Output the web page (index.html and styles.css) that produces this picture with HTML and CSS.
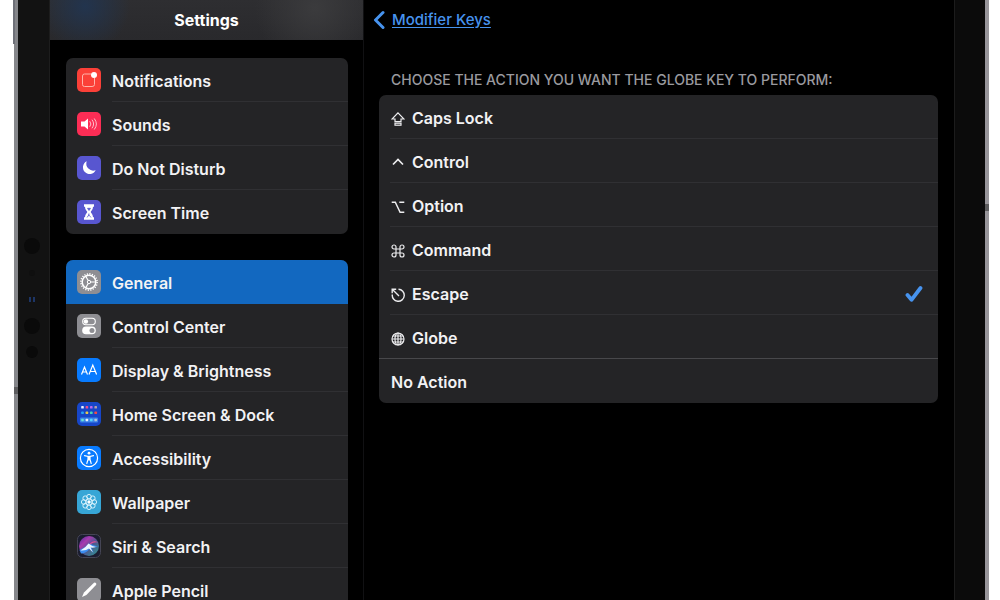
FILE: index.html
```html
<!DOCTYPE html>
<html lang="en">
<head>
<meta charset="utf-8">
<meta name="viewport" content="width=device-width, initial-scale=1">
<title>Settings</title>
<link rel="stylesheet" href="styles.css">
</head>
<body>
<div class="device">
  <span class="side-button"></span>
  <span class="antenna antenna-left"></span>
  <span class="antenna antenna-right"></span>
  <div class="bezel bezel-left">
    <svg class="sensors" width="30" height="130" viewBox="0 0 30 130" aria-hidden="true">
      <g fill="#0a0a0a"><circle cx="14" cy="11" r="8"/><circle cx="14" cy="38" r="3" fill="#0f0f0f"/><circle cx="14" cy="91" r="8"/><circle cx="14" cy="117" r="6"/></g>
      <path d="M12 62v5M16 62v5" stroke="#1d3566" stroke-width="2"/>
    </svg>
  </div>
  <div class="screen">
    <aside class="sidebar">
      <header class="sidebar-header"><h1>Settings</h1></header>
      <nav class="menu" aria-label="Settings">
        <div class="card">
          <a class="item" href="#notifications">
            <svg class="app-icon" viewBox="0 0 24 24" aria-hidden="true"><rect width="24" height="24" rx="5" fill="#fb4038"/><path d="M14 6H7.500Q5.500 6 5.500 8v8.500q0 2 2 2H15q2.500 0 2.500-2V10" fill="none" stroke="#ffb3aa" stroke-width="1"/><circle cx="17" cy="7" r="3" fill="#fff"/></svg>
            <span class="item-text">Notifications</span></a>
          <a class="item" href="#sounds">
            <svg class="app-icon" viewBox="0 0 24 24" aria-hidden="true"><rect width="24" height="24" rx="5" fill="#fc2d55"/><path d="M4 9.500h3.500L11 6.500v11L7.500 14.500H4z" fill="#fff"/><path d="M13 9.500q2 2.500 0 5M15.200 8q3 4 0 8M17.500 6.800q4 5.200 0 10.400" fill="none" stroke="#ffc0cc" stroke-width="1" stroke-linecap="round"/></svg>
            <span class="item-text">Sounds</span></a>
          <a class="item" href="#do-not-disturb">
            <svg class="app-icon" viewBox="0 0 24 24" aria-hidden="true"><rect width="24" height="24" rx="5" fill="#5856d0"/><path d="M9.700 5.300a6.700 6.700 0 1 0 9 8.900A7 7 0 0 1 9.700 5.300z" fill="#fff"/></svg>
            <span class="item-text">Do Not Disturb</span></a>
          <a class="item" href="#screen-time">
            <svg class="app-icon" viewBox="0 0 24 24" aria-hidden="true"><rect width="24" height="24" rx="5" fill="#5856d0"/><path d="M7 4.300h10v2.400h-1c0 3-1.800 4-2.300 5.300.5 1.300 2.300 2.300 2.300 5.300h1v2.400H7v-2.400h1c0-3 1.800-4 2.300-5.300C9.800 10.700 8 9.700 8 6.700H7z" fill="#fff"/><path d="M10.500 8.300h3L12 10.500zM12 13.500v1.500l-2 2.500M12 15l2 2.500" fill="#5856d0" stroke="#5856d0" stroke-width=".7"/></svg>
            <span class="item-text">Screen Time</span></a>
        </div>
        <div class="card">
          <a class="item item-selected" href="#general" aria-current="page">
            <svg class="app-icon" viewBox="0 0 24 24" aria-hidden="true"><rect width="24" height="24" rx="5" fill="#8e8e93"/><circle cx="12" cy="12" r="8.100" fill="none" stroke="#fff" stroke-width="1.600" stroke-dasharray="1.200 1.350"/><circle cx="12" cy="12" r="6.800" fill="none" stroke="#fff" stroke-width="1.500"/><circle cx="12" cy="12" r="1.700" fill="none" stroke="#fff"/><path d="M13.700 12h4.800M11.200 10.500 8.700 6.300M11.200 13.500 8.700 17.700" stroke="#fff" stroke-width="1.200"/></svg>
            <span class="item-text">General</span></a>
          <a class="item" href="#control-center">
            <svg class="app-icon" viewBox="0 0 24 24" aria-hidden="true"><rect width="24" height="24" rx="5" fill="#8e8e93"/><rect x="5.700" y="4.300" width="12.600" height="6.400" rx="3.200" fill="none" stroke="#fff" stroke-width="1.100"/><circle cx="8.900" cy="7.500" r="2.200" fill="#fff"/><rect x="5.200" y="12.600" width="13.600" height="7.600" rx="3.800" fill="#fff"/><circle cx="15" cy="16.400" r="2.500" fill="#8e8e93"/></svg>
            <span class="item-text">Control Center</span></a>
          <a class="item" href="#display">
            <svg class="app-icon" viewBox="0 0 24 24" aria-hidden="true"><rect width="24" height="24" rx="5" fill="#087bff"/><g fill="none" stroke="#fff" stroke-width="1.200"><path d="m4.500 16.500 3-7.500 3 7.500M5.500 14h4M12 16.500 15.800 7l3.800 9.500M13.200 13.500h5.200"/></g></svg>
            <span class="item-text">Display &amp; Brightness</span></a>
          <a class="item" href="#home-screen">
            <svg class="app-icon" viewBox="0 0 24 24" aria-hidden="true"><rect width="24" height="24" rx="5" fill="#1746c8"/><rect x="3" y="15.500" width="18" height="5" rx="1" fill="#3d84e8"/><g fill="#e8f0ff"><rect x="4.200" y="4" width="2.600" height="2.600" rx=".7"/><rect x="8.600" y="4" width="2.600" height="2.600" rx=".7" fill="#f04c87"/><rect x="13" y="4" width="2.600" height="2.600" rx=".7" fill="#bd68ee"/><rect x="17.400" y="4" width="2.600" height="2.600" rx=".7" fill="#b8a0a8"/><rect x="4.200" y="9.500" width="2.600" height="2.600" rx=".7" fill="#27a4f8"/><rect x="8.600" y="9.500" width="2.600" height="2.600" rx=".7" fill="#e9c84b"/><rect x="13" y="9.500" width="2.600" height="2.600" rx=".7" fill="#48d6b5"/><rect x="17.400" y="9.500" width="2.600" height="2.600" rx=".7" fill="#f04b48"/><rect x="4.200" y="16.700" width="2.600" height="2.600" rx=".7" fill="#69e3d0"/><rect x="8.600" y="16.700" width="2.600" height="2.600" rx=".7"/><rect x="13" y="16.700" width="2.600" height="2.600" rx=".7" fill="#53d7ff"/><rect x="17.400" y="16.700" width="2.600" height="2.600" rx=".7" fill="#b5c5d8"/></g></svg>
            <span class="item-text">Home Screen &amp; Dock</span></a>
          <a class="item" href="#accessibility">
            <svg class="app-icon" viewBox="0 0 24 24" aria-hidden="true"><rect width="24" height="24" rx="5" fill="#087bff"/><circle cx="12" cy="12" r="8.600" fill="none" stroke="#fff" stroke-width="1.200"/><circle cx="12" cy="7.200" r="1.400" fill="#fff"/><path d="m7.500 9.700 3.500.8v3l-1.200 4M16.500 9.700l-3.500.8v3l1.200 4M12 10v4" fill="none" stroke="#fff" stroke-width="1.200" stroke-linecap="round"/></svg>
            <span class="item-text">Accessibility</span></a>
          <a class="item" href="#wallpaper">
            <svg class="app-icon" viewBox="0 0 24 24" aria-hidden="true"><rect width="24" height="24" rx="5" fill="#37a6d6"/><g fill="none" stroke="#d8f2fc" stroke-width="1"><circle cx="12" cy="6.700" r="2.300"/><circle cx="15.800" cy="8.200" r="2.300"/><circle cx="17.300" cy="12" r="2.300"/><circle cx="15.800" cy="15.800" r="2.300"/><circle cx="12" cy="17.300" r="2.300"/><circle cx="8.200" cy="15.800" r="2.300"/><circle cx="6.700" cy="12" r="2.300"/><circle cx="8.200" cy="8.200" r="2.300"/><circle cx="12" cy="12" r="3.200"/></g><circle cx="12" cy="12" r="1.700" fill="#fff"/></svg>
            <span class="item-text">Wallpaper</span></a>
          <a class="item" href="#siri">
            <svg class="app-icon" viewBox="0 0 24 24" aria-hidden="true"><defs><linearGradient id="orb" x1="0" y1="0" x2="1" y2="1"><stop offset="0" stop-color="#4b2b9c"/><stop offset=".3" stop-color="#a83bae"/><stop offset=".55" stop-color="#4e578f"/><stop offset="1" stop-color="#2c9a90"/></linearGradient></defs><rect x=".5" y=".5" width="23" height="23" rx="5" fill="#1b1d30" stroke="#454555"/><circle cx="12" cy="12" r="10" fill="url(#orb)"/><path d="M2.500 16Q8 14 12 9.500q5 2 9 3-4 1-7 .5l3 6.500-4-5q-4 5-9 5z" fill="#3b8df0"/><path d="M3.500 16.500Q9 13.500 11.500 9.500 15 12.500 19 13q-3 1-5.500.5l2.500 5-4-4q-3 2.500-8.500 2z" fill="#e9f5ff"/><path d="M13 9.500q4-4 8-1-4-1-8 2z" fill="#e64f93"/></svg>
            <span class="item-text">Siri &amp; Search</span></a>
          <a class="item" href="#pencil">
            <svg class="app-icon" viewBox="0 0 24 24" aria-hidden="true"><rect width="24" height="24" rx="5" fill="#8e8e93"/><path d="m5 19 2-4.500L17 4.800q1-.8 1.900.1.900 1 .1 2L9.400 17z" fill="#fff"/></svg>
            <span class="item-text">Apple Pencil</span></a>
        </div>
      </nav>
    </aside>
    <main class="detail">
      <header class="detail-header">
        <a class="back" href="#modifier-keys">
          <svg width="12" height="20" viewBox="0 0 12 20" aria-hidden="true"><path d="M10 2.500 2.500 10l7.500 7.500" fill="none" stroke="#4793ee" stroke-width="3" stroke-linecap="round" stroke-linejoin="round"/></svg>
          <span class="back-text">Modifier Keys</span></a>
      </header>
      <fieldset class="choices">
        <legend class="choices-title">CHOOSE THE ACTION YOU WANT THE GLOBE KEY TO PERFORM:</legend>
        <div class="card">
          <label class="option"><input type="radio" name="action">
            <svg class="glyph" viewBox="0 0 14 14" aria-hidden="true"><path d="M7 .8 13 7H10v2.600H4V7H1z"/><rect x="4" y="11.200" width="6" height="2"/></svg>
            <span>Caps Lock</span></label>
          <label class="option"><input type="radio" name="action">
            <svg class="glyph" viewBox="0 0 14 14" aria-hidden="true"><path d="m2 8.500 5-5 5 5" stroke-width="1.700"/></svg>
            <span>Control</span></label>
          <label class="option"><input type="radio" name="action">
            <svg class="glyph" viewBox="0 0 14 14" aria-hidden="true"><path d="M.7 2.200h3.600l4.800 10h4.200M8.300 2.200h5" stroke-width="1.500"/></svg>
            <span>Option</span></label>
          <label class="option"><input type="radio" name="action">
            <svg class="glyph" viewBox="0 0 14 14" aria-hidden="true"><path d="M5 5H3a2 2 0 1 1 2-2v8a2 2 0 1 1-2-2h8a2 2 0 1 1-2 2V3a2 2 0 1 1 2 2z"/></svg>
            <span>Command</span></label>
          <label class="option"><input type="radio" name="action" checked>
            <svg class="glyph" viewBox="0 0 14 14" aria-hidden="true"><path d="M7.500 1.300A6 6 0 1 1 1.300 6.500M8 8 2 2M1.200 5.200v-4h4" stroke-width="1.400"/></svg>
            <span>Escape</span>
            <svg class="check" width="18" height="18" viewBox="0 0 18 18" aria-hidden="true"><path d="m2.500 10 4 4.800L15.500 3" fill="none" stroke="#4793ee" stroke-width="3.800" stroke-linecap="round" stroke-linejoin="round"/></svg></label>
          <label class="option"><input type="radio" name="action">
            <svg class="glyph" viewBox="0 0 14 14" aria-hidden="true"><circle cx="7" cy="7" r="6"/><ellipse cx="7" cy="7" rx="3" ry="6"/><path d="M7 1v12M1 7h12M2 4h10M2 10h10"/></svg>
            <span>Globe</span></label>
          <label class="option"><input type="radio" name="action">
            <span>No Action</span></label>
        </div>
      </fieldset>
    </main>
  </div>
  <div class="bezel bezel-right"></div>
</div>
</body>
</html>
```
FILE: styles.css
```css
* { box-sizing: border-box; }
body {
  margin: 0;
  background: #fff;
  color: #f2f2f4;
  font: 600 16px/24px Inter, "Liberation Sans", sans-serif;
}
.device {
  position: relative;
  display: flex;
  height: 100vh;
  margin: 0 11px 0 14px;
  background: #000;
  border-left: 4px solid #85868a;
  border-right: 4px solid #98969b;
}
.bezel { flex: none; }
.bezel-left {
  width: 32px;
  padding-top: 235px;
  background: #121212;
  border-right: 1px solid #1d1d1d;
}
.sensors { display: block; }
.bezel-right {
  width: 31px;
  background: #0b0b0b;
  border-left: 1px solid #1c1c1c;
}
.side-button {
  position: absolute;
  top: 0;
  left: -5px;
  width: 2px;
  height: 44px;
  background: #6e7078;
}
.antenna {
  position: absolute;
  width: 4px;
  height: 7px;
  background: #5c5c5e;
}
.antenna-left { top: 387px; left: -4px; }
.antenna-right { top: 204px; right: -4px; }
.screen {
  flex: 1;
  display: flex;
  min-width: 0;
  overflow: hidden;
}
.sidebar {
  flex: 0 0 314px;
  border-right: 1px solid #111113;
}
.sidebar-header {
  display: flex;
  align-items: center;
  justify-content: center;
  height: 40px;
  background:
    radial-gradient(circle at 35px 6px, #22344e 0, transparent 45px),
    radial-gradient(circle at 265px 8px, #3b3b3d 0, transparent 60px),
    linear-gradient(#2e2e31, #29292c);
}
h1 {
  margin: 0;
  padding-bottom: 1px;
  font-size: 16px;
  font-weight: 700;
  line-height: 24px;
  color: #fff;
}
.menu {
  display: flex;
  flex-direction: column;
  gap: 26px;
  padding: 18px 15px 0 16px;
}
.card {
  overflow: hidden;
  background: #242426;
  border-radius: 7px;
}
.item {
  display: flex;
  align-items: center;
  gap: 11px;
  height: 44px;
  padding-left: 11px;
  color: inherit;
  text-decoration: none;
}
.app-icon {
  flex: none;
  width: 24px;
  height: 24px;
}
.item-text {
  flex: 1;
  align-self: stretch;
  padding: 11px 0 8px;
  border-bottom: 1px solid #303033;
}
.item:last-child .item-text,
.item-selected .item-text { border-color: transparent; }
.item-selected { background: #1268c0; }
.detail {
  flex: 1;
  min-width: 0;
  padding: 0 16px 0 15px;
}
.detail-header {
  display: flex;
  align-items: center;
  height: 40px;
}
.back {
  display: flex;
  align-items: center;
  gap: 7px;
  margin-left: -6px;
  color: #4793ee;
  font-size: 15px;
  font-weight: 500;
  text-decoration: none;
}
.back-text {
  text-decoration: underline;
  text-underline-offset: 2px;
}
.choices {
  min-width: 0;
  margin: 0;
  padding: 0;
  border: 0;
}
.choices-title {
  padding: 28px 12px 3px;
  color: #9a9a9f;
  font-size: 14px;
  font-weight: 500;
}
.option {
  position: relative;
  display: flex;
  align-items: center;
  gap: 7px;
  height: 44px;
  padding: 2px 15px 0 12px;
}
.option::after {
  content: "";
  position: absolute;
  right: 0;
  bottom: 0;
  left: 11px;
  border-bottom: 1px solid #303033;
}
.option:nth-last-child(2)::after {
  left: 0;
  border-color: #48484b;
}
.option:last-child::after { display: none; }
.option input {
  position: absolute;
  opacity: 0;
}
.glyph {
  flex: none;
  width: 14px;
  height: 14px;
  margin-top: 1px;
  fill: none;
  stroke: #ececee;
  stroke-width: 1.2;
}
.check {
  margin-left: auto;
}
```
